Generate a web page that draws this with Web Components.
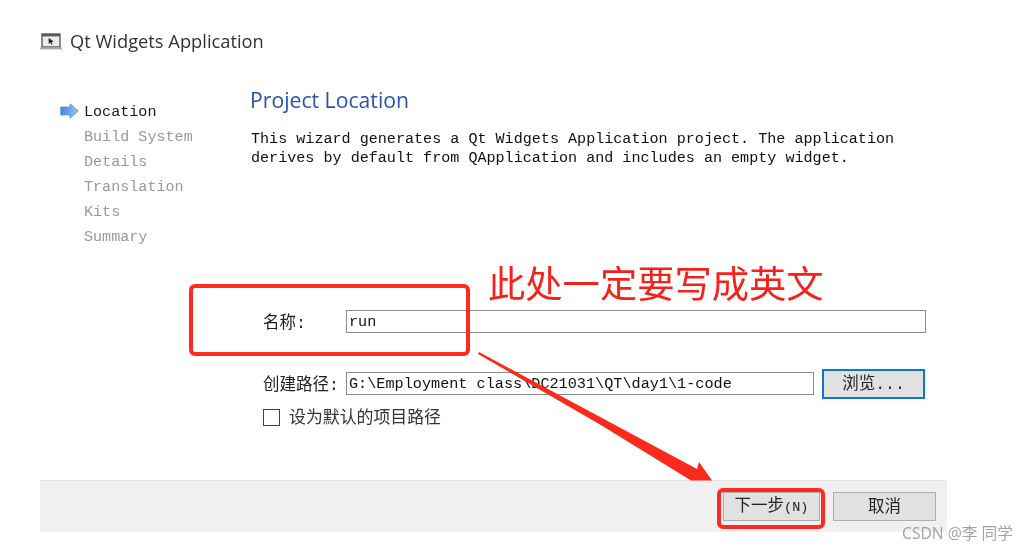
<!DOCTYPE html>
<html lang="zh">
<head>
<meta charset="utf-8">
<title>Qt Widgets Application</title>
<style>
  html, body { margin: 0; background: #fff; }
  body { width: 1030px; height: 550px; overflow: hidden; }
</style>
</head>
<body>
<wizard-page>
  <wizard-steps slot="steps">
    <step-item active>Location</step-item>
    <step-item>Build System</step-item>
    <step-item>Details</step-item>
    <step-item>Translation</step-item>
    <step-item>Kits</step-item>
    <step-item>Summary</step-item>
  </wizard-steps>
  <form-row slot="form" label="名称:" gap-top="0" value="run" width="580"></form-row>
  <form-row slot="form" label="创建路径:" gap-top="39" value="G:\Employment class\DC21031\QT\day1\1-code" width="468" browse></form-row>
  <check-row slot="form">设为默认的项目路径</check-row>
  <wizard-button slot="footer" kind="next">下一步<i>(N)</i></wizard-button>
  <wizard-button slot="footer">取消</wizard-button>
</wizard-page>
<red-notes></red-notes>

<script>
const monoStack = '"Liberation Mono", "Noto Sans CJK SC", monospace'

class WizardPage extends HTMLElement {
  static get style() {
    return /*css*/`
      :host { display: block; width: 1030px; height: 550px; box-sizing: border-box; padding-left: 40px; color: #1c1c1c; filter: blur(0.35px); }
      .wrap { width: 907px; }
      header { display: flex; align-items: center; gap: 8px; height: 30px; padding-top: 26px; }
      header span { font: 18.3px/30px "Open Sans", "Noto Sans", sans-serif; color: #333; }
      .body { display: flex; height: 424px; }
      .left { width: 210px; flex: none; padding-top: 44px; }
      .main { flex: 1; padding-top: 30px; }
      h1 { margin: 0; font: 400 21.2px/28px "Open Sans", "Noto Sans", sans-serif; color: #2a52b0; }
      p { margin: 16px 0 0 1px; font: 15.1px/19px ${monoStack}; color: #111; white-space: pre; }
      .form { margin-top: 142px; margin-left: 13px; }
      footer { display: flex; justify-content: flex-end; align-items: center; gap: 13px; height: 52px; padding-right: 11px; box-sizing: border-box; background: #f0f0f0; border-top: 1px solid #e4e4e4; }
    `
  }

  constructor() {
    super()
    this.attachShadow({ mode: 'open' })
    this.shadowRoot.innerHTML = /*html*/`
      <style>${WizardPage.style}</style>
      <div class="wrap">
        <header>
          <svg width="22" height="17" viewBox="0 0 22 17">
            <rect x="2" y="1" width="18" height="13" fill="#ececec" stroke="#5a5a5a" stroke-width="1.4"/>
            <path d="M2 1h18v2.4H2z" fill="#5a5a5a"/>
            <path d="M0 14.4h22v2H0z" fill="#a8a8a8"/>
            <path d="M8.6 5l5.2 3.6-2.3.5 1 2.2-1.1.5-1-2.3-1.7 1.5z" fill="#222"/>
          </svg>
          <span>Qt Widgets Application</span>
        </header>
        <div class="body">
          <div class="left"><slot name="steps"></slot></div>
          <div class="main">
            <h1>Project Location</h1>
            <p>This wizard generates a Qt Widgets Application project. The application
derives by default from QApplication and includes an empty widget.</p>
            <div class="form"><slot name="form"></slot></div>
          </div>
        </div>
        <footer><slot name="footer"></slot></footer>
      </div>
    `
  }
}

class WizardSteps extends HTMLElement {
  constructor() {
    super()
    this.attachShadow({ mode: 'open' })
    this.shadowRoot.innerHTML = /*html*/`
      <style>:host { display: block; }</style>
      <slot></slot>
    `
  }
}

class StepItem extends HTMLElement {
  constructor() {
    super()
    this.attachShadow({ mode: 'open' })
    const arrow = this.hasAttribute('active')
      ? `<svg width="19" height="16" viewBox="0 0 19 16">
           <defs><linearGradient id="g" x1="0" x2="1"><stop offset="0" stop-color="#3f86e0"/><stop offset="1" stop-color="#9cc4f2"/></linearGradient></defs>
           <path d="M.7 4H10V.8L18.2 8 10 15.2V12H.7z" fill="url(#g)" stroke="#5c8fd0" stroke-width=".8"/>
         </svg>`
      : ''
    this.shadowRoot.innerHTML = /*html*/`
      <style>
        :host { display: flex; align-items: center; height: 25px; font: 15.1px/25px ${monoStack}; color: #9a9a9a; white-space: pre; }
        :host([active]) { color: #1a1a1a; }
        .mark { width: 44px; flex: none; display: flex; padding-left: 20px; margin-top: -3px; box-sizing: border-box; }
      </style>
      <div class="mark">${arrow}</div>
      <span><slot></slot></span>
    `
  }
}

class FormRow extends HTMLElement {
  static get style() {
    return /*css*/`
      :host { display: flex; align-items: center; height: 23px; font: 16.5px/23px ${monoStack}; color: #222; }
      label { width: 83px; flex: none; padding-top: 4px; white-space: pre; }
      .field { box-sizing: border-box; height: 23px; padding: 1px 0 0 2px; border: 1px solid #8c8c8c; background: #fff; font: 15.2px/20px ${monoStack}; color: #111; white-space: pre; }
      button { box-sizing: border-box; width: 103px; height: 30px; margin-left: 8px; padding: 2px 0 0; border: 2px solid #0a78d4; background: #e1e1e1; font: 16.5px/24px ${monoStack}; color: #222; }
    `
  }

  constructor() {
    super()
    this.attachShadow({ mode: 'open' })
    const browse = this.hasAttribute('browse') ? '<button>浏览...</button>' : ''
    this.style.marginTop = this.getAttribute('gap-top') + 'px'
    this.shadowRoot.innerHTML = /*html*/`
      <style>${FormRow.style}</style>
      <label>${this.getAttribute('label')}</label>
      <div class="field" style="width:${this.getAttribute('width')}px">${this.getAttribute('value')}</div>
      ${browse}
    `
  }
}

class CheckRow extends HTMLElement {
  constructor() {
    super()
    this.attachShadow({ mode: 'open' })
    this.shadowRoot.innerHTML = /*html*/`
      <style>
        :host { display: flex; align-items: center; gap: 9px; height: 18px; margin-top: 13px; font: 16.9px/18px ${monoStack}; color: #333; }
        .box { width: 17px; height: 17px; box-sizing: border-box; border: 1px solid #444; background: #fff; }
        span { padding-top: 4px; }
      </style>
      <div class="box"></div>
      <span><slot></slot></span>
    `
  }
}

class WizardButton extends HTMLElement {
  constructor() {
    super()
    this.attachShadow({ mode: 'open' })
    this.shadowRoot.innerHTML = /*html*/`
      <style>
        :host { display: flex; justify-content: center; align-items: center; box-sizing: border-box; width: 103px; height: 29px; border: 1px solid #adadad; background: #e1e1e1; font: 16.5px/27px ${monoStack}; color: #222; white-space: pre; }
        :host([kind="next"]) { width: 97px; }
        ::slotted(i) { font: normal 13.5px/27px ${monoStack}; }
        span { padding-top: 1px; }
      </style>
      <span><slot></slot></span>
    `
  }
}

// red annotations drawn on top of the screenshot
class RedNotes extends HTMLElement {
  constructor() {
    super()
    this.attachShadow({ mode: 'open' })
    this.shadowRoot.innerHTML = /*html*/`
      <style>
        :host { position: absolute; left: 0; top: 0; width: 1030px; height: 550px; filter: blur(0.3px); }
        .box { position: absolute; box-sizing: border-box; border: 4px solid #fe2a1f; border-radius: 6px; }
        .name { left: 189px; top: 284px; width: 281px; height: 72px; }
        .next { left: 717px; top: 488px; width: 108px; height: 41px; }
        .say { position: absolute; left: 488px; top: 256px; font: 400 37.3px/52px "Noto Sans CJK SC", sans-serif; color: #f5221b; white-space: pre; }
        .mark { position: absolute; left: 902px; top: 523px; font: 15.7px/20px "Open Sans", "Noto Sans CJK SC", sans-serif; color: #a3a3a3; white-space: pre; }
        svg { position: absolute; left: 0; top: 0; }
      </style>
      <svg width="1030" height="550" viewBox="0 0 1030 550">
        <path d="M479 352L697 469 699 462 712 480.5 691 480.5 600 424.5 478 354z" fill="#fc2a1c"/>
      </svg>
      <div class="box name"></div>
      <div class="box next"></div>
      <div class="say">此处一定要写成英文</div>
      <div class="mark">CSDN @李 同学</div>
    `
  }
}

customElements.define('wizard-page', WizardPage)
customElements.define('wizard-steps', WizardSteps)
customElements.define('step-item', StepItem)
customElements.define('form-row', FormRow)
customElements.define('check-row', CheckRow)
customElements.define('wizard-button', WizardButton)
customElements.define('red-notes', RedNotes)
</script>
</body>
</html>
